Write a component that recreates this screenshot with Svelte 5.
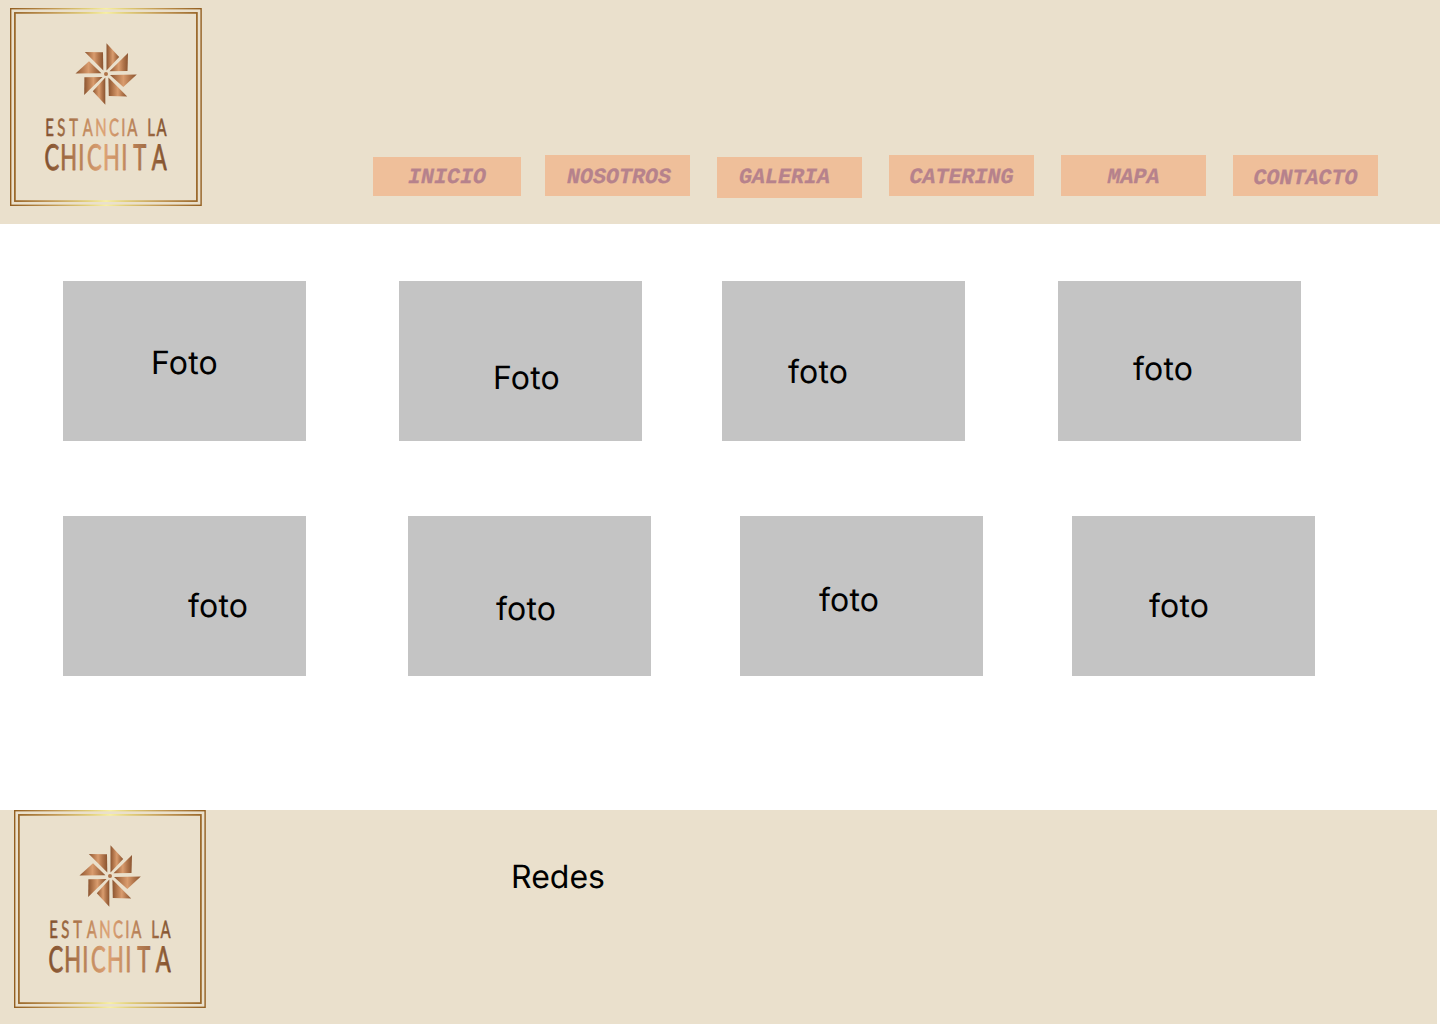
<script>
  const links = ['INICIO', 'NOSOTROS', 'GALERIA', 'CATERING', 'MAPA', 'CONTACTO'];
  const firstRow = ['Foto', 'Foto', 'foto', 'foto'];
  const secondRow = ['foto', 'foto', 'foto', 'foto'];
  const blades = [
    '96.5,35.3 109.2,49 96.5,62.6',
    '118,45 117.5,63 99.5,63.3',
    '126.8,66.5 113.3,79 100,67',
    '98.4,69.4 117.2,88.4 98.8,88',
    '95.3,69.6 95.3,96.8 82.8,83.3',
    '92.5,69 74.2,87 74.4,69.2',
    '91.4,65.3 79,53.2 65.5,65.5',
    '93.3,62.4 74.8,44 93,44.3'
  ];
</script>

{#snippet logo(id)}
  <svg class="logo" width="192" height="198" viewBox="0 0 192 198" role="img" aria-label="Estancia La Chichita">
    <defs>
      <linearGradient id="{id}-gold" gradientUnits="userSpaceOnUse" x1="0" y1="0" x2="192" y2="0">
        <stop offset="0" stop-color="#925e20" />
        <stop offset=".2" stop-color="#bd914d" />
        <stop offset=".4" stop-color="#e2cf78" />
        <stop offset=".5" stop-color="#f8f0a2" />
        <stop offset=".6" stop-color="#e2cf78" />
        <stop offset=".8" stop-color="#bd914d" />
        <stop offset="1" stop-color="#925e20" />
      </linearGradient>
      <linearGradient id="{id}-blade">
        <stop offset="0" stop-color="#8a5430" />
        <stop offset=".2" stop-color="#ad7147" />
        <stop offset=".5" stop-color="#d99c6e" />
        <stop offset=".75" stop-color="#b0744a" />
        <stop offset="1" stop-color="#8a5430" />
      </linearGradient>
      <linearGradient id="{id}-copper" gradientUnits="userSpaceOnUse" x1="56.5" y1="0" x2="253" y2="0">
        <stop offset="0" stop-color="#80502e" />
        <stop offset=".25" stop-color="#b07a50" />
        <stop offset=".48" stop-color="#dda274" />
        <stop offset=".75" stop-color="#b47c52" />
        <stop offset="1" stop-color="#80502b" />
      </linearGradient>
    </defs>
    <g fill="none" stroke="url(#{id}-gold)">
      <rect x=".7" y=".7" width="190.4" height="196.6" stroke-width="1.4" />
      <rect x="4.9" y="4.9" width="182" height="188.2" stroke-width="1.7" />
    </g>
    {#each blades as points}
      <polygon {points} fill="url(#{id}-blade)" />
    {/each}
    <circle cx="96" cy="66" r="2" fill="#b0744a" />
    <g class="wordmark" transform="scale(.62 1)" fill="url(#{id}-copper)" stroke="url(#{id}-copper)">
      <text x="63.6 82.6 102.6 125.6 146.6 167.8 183 197.1 213 227.5 244.4" y="128" font-size="24" stroke-width=".6">ESTANCIA LA</text>
      <text x="67.4 94.6 115.2 136.2 163.4 184.4 209.2 240.6" y="161.8" font-size="35.5" stroke-width=".9">CHICHITA</text>
    </g>
  </svg>
{/snippet}

<div class="page">
  <header>
    {@render logo('top')}
    <nav>
      {#each links as link}
        <a href="#{link.toLowerCase()}"><span>{link}</span></a>
      {/each}
    </nav>
  </header>
  <main>
    <section class="row first">
      {#each firstRow as label}
        <div class="photo"><span>{label}</span></div>
      {/each}
    </section>
    <section class="row second">
      {#each secondRow as label}
        <div class="photo"><span>{label}</span></div>
      {/each}
    </section>
  </main>
  <footer>
    {@render logo('bottom')}
    <p>Redes</p>
  </footer>
</div>

<style>
  :global(body) { margin: 0; background: #fff; }
  .page {
    width: 1440px;
    height: 1024px;
    display: flex;
    flex-direction: column;
    overflow: hidden;
    font-family: Inter, sans-serif;
    font-size: 32px;
    line-height: 39px;
    color: #000;
    text-rendering: geometricPrecision;
  }
  header {
    box-sizing: border-box;
    height: 224px;
    display: flex;
    padding: 8px 0 0 10px;
    background: #eae0cc;
  }
  .logo { display: block; flex: none; }
  .wordmark {
    font-family: Lato, sans-serif;
    text-anchor: middle;
    stroke-linejoin: round;
  }
  nav {
    display: flex;
    align-items: flex-start;
    gap: 27px;
    margin-left: 171px;
    padding-top: 147px;
  }
  nav a {
    box-sizing: border-box;
    width: 145px;
    height: 41px;
    padding-top: 10px;
    text-align: center;
    background: #efbf9a;
    color: #b6828c;
    font: italic bold 21.7px/25px "Liberation Mono", monospace;
    -webkit-text-stroke: .3px #b6828c;
    text-decoration: none;
  }
  nav a:nth-child(1) { width: 148px; height: 39px; margin: 2px -3px 0 0; padding-top: 8px; }
  nav a:nth-child(2) { padding-left: 3px; }
  nav a:nth-child(3) { margin-top: 2px; padding: 8px 10px 0 0; }
  nav a:nth-child(6) { padding-top: 11px; }
  main { height: 586px; box-sizing: border-box; padding: 57px 0 0 63px; }
  .row { display: flex; }
  .second { margin-top: 75px; }
  .photo {
    box-sizing: border-box;
    width: 243px;
    height: 160px;
    background: #c4c4c4;
    letter-spacing: .2px;
  }
  .first .photo:nth-child(1) { padding: 62px 0 0 88px; }
  .first .photo:nth-child(2) { margin-left: 93px; padding: 77px 0 0 94px; }
  .first .photo:nth-child(3) { margin-left: 80px; padding: 71px 0 0 66px; }
  .first .photo:nth-child(4) { margin-left: 93px; padding: 68px 0 0 75px; }
  .second .photo:nth-child(1) { padding: 70px 0 0 125px; }
  .second .photo:nth-child(2) { margin-left: 102px; padding: 73px 0 0 88px; }
  .second .photo:nth-child(3) { margin-left: 89px; padding: 64px 0 0 79px; }
  .second .photo:nth-child(4) { margin-left: 89px; padding: 70px 0 0 77px; }
  footer {
    box-sizing: border-box;
    width: 1437px;
    height: 214px;
    display: flex;
    padding-left: 14px;
    background: #eae0cc;
  }
  footer p { margin: 47px 0 0 305px; }
</style>
